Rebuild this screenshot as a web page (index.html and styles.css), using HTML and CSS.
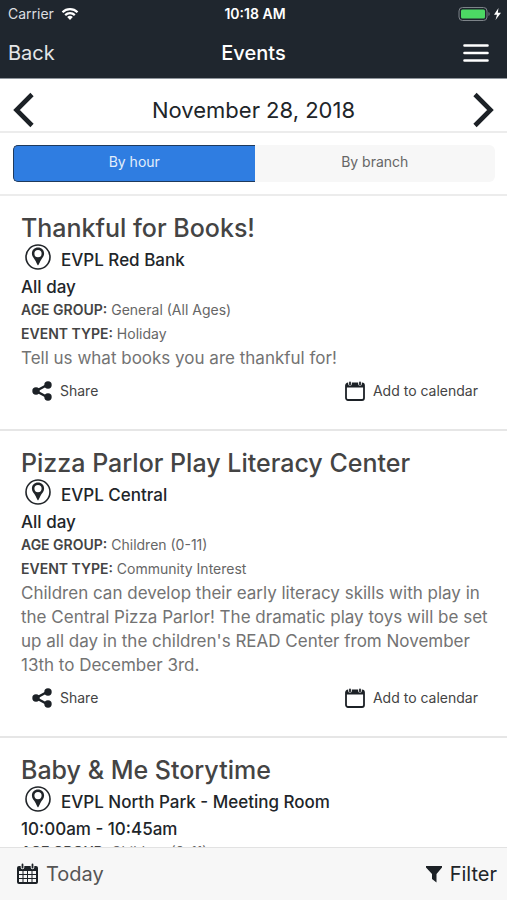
FILE: index.html
```html
<!DOCTYPE html>
<html lang="en">
<head>
    <meta charset="UTF-8">
    <meta name="viewport" content="width=device-width, initial-scale=1.0">
    <title>Events</title>
    <link rel="stylesheet" href="styles.css">
</head>
<body>
    <!-- shared icons -->
    <svg class="icon-defs" width="0" height="0" aria-hidden="true">
        <symbol id="icon-pin" viewBox="0 0 26 26">
            <circle cx="13" cy="13" r="12" fill="none" stroke="currentColor" stroke-width="1.6"/>
            <path fill="currentColor" fill-rule="evenodd" d="M13 3.600c-3.500 0-6.100 2.600-6.100 5.900 0 3.200 2.300 4.700 3.700 7.500.8 1.500 1.300 3.200 2.400 4.400 1.100-1.200 1.600-2.900 2.400-4.400 1.400-2.800 3.700-4.300 3.700-7.500 0-3.300-2.600-5.900-6.100-5.900zM13 6a3.600 3.600 0 1 1 0 7.200A3.600 3.600 0 0 1 13 6z"/>
        </symbol>
        <symbol id="icon-share" viewBox="0 0 20 20">
            <path d="M16 3.500 4 10l12 6.500" fill="none" stroke="currentColor" stroke-width="2.400"/>
            <circle cx="16" cy="4" r="3.700" fill="currentColor"/>
            <circle cx="4" cy="10" r="3.700" fill="currentColor"/>
            <circle cx="16" cy="16" r="3.700" fill="currentColor"/>
        </symbol>
        <symbol id="icon-calendar" viewBox="0 0 20 20">
            <rect x="1" y="2.500" width="18" height="16.500" rx="2" fill="none" stroke="currentColor" stroke-width="1.800"/>
            <path d="M1 3h18v3.500H1z" fill="currentColor"/>
            <path d="M5 0v3M15 0v3" stroke="#fff" stroke-width="3.600" stroke-linecap="round"/>
            <path d="M5 1.500v2M15 1.500v2" stroke="currentColor" stroke-width="1.800" stroke-linecap="round"/>
        </symbol>
    </svg>

    <header>
        <div class="status-bar">
            <div class="carrier">
                <span>Carrier</span>
                <svg width="18" height="14" viewBox="0 0 18 14" aria-hidden="true">
                    <path d="M1.500 5.300a10.600 10.600 0 0 1 15 0M4.200 8.100a6.800 6.800 0 0 1 9.600 0" fill="none" stroke="#fff" stroke-width="2.200"/>
                    <path d="M9 13 6.200 10.100a4 4 0 0 1 5.600 0z" fill="#fff"/>
                </svg>
            </div>
            <div class="time">10:18 AM</div>
            <div class="battery">
                <svg width="44" height="16" viewBox="0 0 44 16" aria-hidden="true">
                    <rect x="1" y="1.500" width="28" height="13" rx="3.500" fill="none" stroke="#7d8389"/>
                    <rect x="3" y="3.500" width="24" height="9" rx="1.500" fill="#4cd964"/>
                    <path d="M30.500 6c1.500.7 1.500 3.300 0 4z" fill="#7d8389"/>
                    <path d="M40.500 2 36 8.800h3L37.500 14l5.500-7.200h-3.200z" fill="#fff"/>
                </svg>
            </div>
        </div>
        <nav>
            <a href="#" class="back">Back</a>
            <h1>Events</h1>
            <button class="menu" type="button" aria-label="Menu">
                <svg width="26" height="20" viewBox="0 0 26 20" aria-hidden="true">
                    <path d="M1.500 2.500h23M1.500 10h23M1.500 17.500h23" stroke="#fff" stroke-width="2.600" stroke-linecap="round"/>
                </svg>
            </button>
        </nav>
    </header>

    <div class="date-bar">
        <button type="button" aria-label="Previous day">
            <svg width="22" height="36" viewBox="0 0 22 36" aria-hidden="true">
                <path d="M19 2.500 3.500 18 19 33.500" fill="none" stroke="#1c2126" stroke-width="4.600"/>
            </svg>
        </button>
        <h2>November 28, 2018</h2>
        <button type="button" aria-label="Next day">
            <svg width="22" height="36" viewBox="0 0 22 36" aria-hidden="true">
                <path d="M3 2.500 18.500 18 3 33.500" fill="none" stroke="#1c2126" stroke-width="4.600"/>
            </svg>
        </button>
    </div>

    <div class="tabs">
        <button type="button" class="tab active">By hour</button>
        <button type="button" class="tab">By branch</button>
    </div>

    <main>
        <article class="event">
            <h3>Thankful for Books!</h3>
            <div class="location">
                <svg width="26" height="26" aria-hidden="true"><use href="#icon-pin"/></svg>
                <span>EVPL Red Bank</span>
            </div>
            <p class="when">All day</p>
            <p class="meta"><b>AGE GROUP:</b> General (All Ages)</p>
            <p class="meta"><b>EVENT TYPE:</b> Holiday</p>
            <p class="description">Tell us what books you are thankful for!</p>
            <div class="actions">
                <button type="button"><svg width="20" height="20" aria-hidden="true"><use href="#icon-share"/></svg>Share</button>
                <button type="button"><svg width="20" height="20" aria-hidden="true"><use href="#icon-calendar"/></svg>Add to calendar</button>
            </div>
        </article>

        <article class="event">
            <h3>Pizza Parlor Play Literacy Center</h3>
            <div class="location">
                <svg width="26" height="26" aria-hidden="true"><use href="#icon-pin"/></svg>
                <span>EVPL Central</span>
            </div>
            <p class="when">All day</p>
            <p class="meta"><b>AGE GROUP:</b> Children (0-11)</p>
            <p class="meta"><b>EVENT TYPE:</b> Community Interest</p>
            <p class="description">Children can develop their early literacy skills with play in the Central Pizza Parlor! The dramatic play toys will be set up all day in the children's READ Center from November 13th to December 3rd.</p>
            <div class="actions">
                <button type="button"><svg width="20" height="20" aria-hidden="true"><use href="#icon-share"/></svg>Share</button>
                <button type="button"><svg width="20" height="20" aria-hidden="true"><use href="#icon-calendar"/></svg>Add to calendar</button>
            </div>
        </article>

        <article class="event">
            <h3>Baby &amp; Me Storytime</h3>
            <div class="location">
                <svg width="26" height="26" aria-hidden="true"><use href="#icon-pin"/></svg>
                <span>EVPL North Park - Meeting Room</span>
            </div>
            <p class="when">10:00am - 10:45am</p>
            <p class="meta"><b>AGE GROUP:</b> Children (0-11)</p>
        </article>
    </main>

    <footer>
        <button type="button" class="today">
            <svg width="22" height="22" viewBox="0 0 22 22" aria-hidden="true">
                <rect x="0" y="3" width="21" height="18" rx="2" fill="#1c2126"/>
                <path d="M2 8h3.500v3H2zM6.500 8H10v3H6.500zM11 8h3.500v3H11zM15.500 8H19v3h-3.500zM2 12h3.500v3H2zM6.500 12H10v3H6.500zM11 12h3.500v3H11zM15.500 12H19v3h-3.500zM2 16h3.500v3H2zM6.500 16H10v3H6.500zM11 16h3.500v3H11zM15.500 16H19v3h-3.500z" fill="#f7f7f7"/>
                <path d="M5.500 1v3.500M15.500 1v3.500" stroke="#f7f7f7" stroke-width="3.600" stroke-linecap="round"/>
                <path d="M5.500 1.500v3M15.500 1.500v3" stroke="#1c2126" stroke-width="1.800" stroke-linecap="round"/>
            </svg>
            Today
        </button>
        <button type="button" class="filter">
            <svg width="18" height="18" viewBox="0 0 18 18" aria-hidden="true">
                <path d="M1 1h16v1.500L11.500 9v8.500L7 14V9L1 2.500z" fill="#1c2126"/>
            </svg>
            Filter
        </button>
    </footer>
</body>
</html>
```

FILE: styles.css
```css
* {
    box-sizing: border-box;
}

body {
    font-family: Inter, "Liberation Sans", sans-serif;
    margin: 0;
    display: flex;
    flex-direction: column;
    height: 100vh;
    background-color: #fff;
    color: #212529;
}

h1, h2, h3, p {
    margin: 0;
}

button {
    font-family: inherit;
    color: inherit;
    background: none;
    border: none;
    padding: 0;
    cursor: pointer;
}

svg {
    display: block;
    flex-shrink: 0;
}

.icon-defs {
    position: absolute;
}

header {
    background-color: #1f262e;
    color: #fff;
    border-bottom: 1px solid #8f959c;
}

.status-bar,
nav {
    display: grid;
    grid-template-columns: 1fr auto 1fr;
    align-items: center;
}

.status-bar {
    height: 27px;
    padding: 0 5px 0 8px;
    font-size: 14px;
}

.carrier {
    display: flex;
    align-items: center;
    gap: 7px;
    color: #dcdee0;
}

.time {
    font-weight: 600;
}

.battery,
.menu {
    justify-self: end;
}

nav {
    height: 51px;
    padding: 0 8px;
}

.menu {
    margin-right: 10px;
}

.back {
    color: #e4e6e8;
    font-size: 20px;
    text-decoration: none;
}

nav h1 {
    font-size: 20px;
    font-weight: 500;
}

.date-bar {
    display: flex;
    justify-content: space-between;
    align-items: center;
    height: 54px;
    padding: 9px 13px 0;
    border-bottom: 2px solid #ececec;
}

.date-bar h2 {
    font-size: 22px;
    font-weight: 400;
}

.tabs {
    display: flex;
    padding: 12px 12px 12px 13px;
    border-bottom: 2px solid #ececec;
}

.tab {
    flex: 1;
    height: 37px;
    padding-bottom: 4px;
    font-size: 14px;
    color: #666;
    background-color: #f7f7f7;
    border-radius: 0 6px 6px 0;
}

.tab.active {
    color: #e3eefb;
    background-color: #2f7de1;
    border: 1px solid #1f3a5c;
    border-right: none;
    border-radius: 5px 0 0 5px;
}

main {
    flex: 1;
    min-height: 0;
    overflow-y: auto;
    scrollbar-width: none;
}

.event {
    padding: 16px 16px 28px 21px;
    border-bottom: 2px solid #e6e6e6;
}

.event h3 {
    font-size: 25px;
    font-weight: 500;
    line-height: 32px;
    color: #444;
}

.location {
    display: flex;
    gap: 10px;
    height: 32px;
    padding-left: 4px;
    font-size: 17px;
    font-weight: 500;
    line-height: 32px;
}

.when {
    font-size: 17px;
    font-weight: 500;
    line-height: 22px;
}

.meta {
    font-size: 14px;
    line-height: 24px;
    color: #666;
}

.meta b {
    font-weight: 600;
    color: #444;
}

.description {
    font-size: 17px;
    line-height: 24px;
    color: #737373;
}

.actions {
    display: flex;
    justify-content: space-between;
    padding: 11px 13px 0 11px;
}

.actions button {
    display: flex;
    align-items: center;
    gap: 8px;
    font-size: 14px;
    line-height: 20px;
    color: #444;
}

.actions svg {
    color: #1c2126;
}

footer {
    display: flex;
    justify-content: space-between;
    align-items: center;
    height: 53px;
    padding: 0 10px 0 17px;
    background-color: #f7f7f7;
    border-top: 1px solid #e2e2e2;
}

footer button {
    display: flex;
    align-items: center;
    gap: 7px;
    font-size: 20px;
}

.today {
    color: #555;
}
```
